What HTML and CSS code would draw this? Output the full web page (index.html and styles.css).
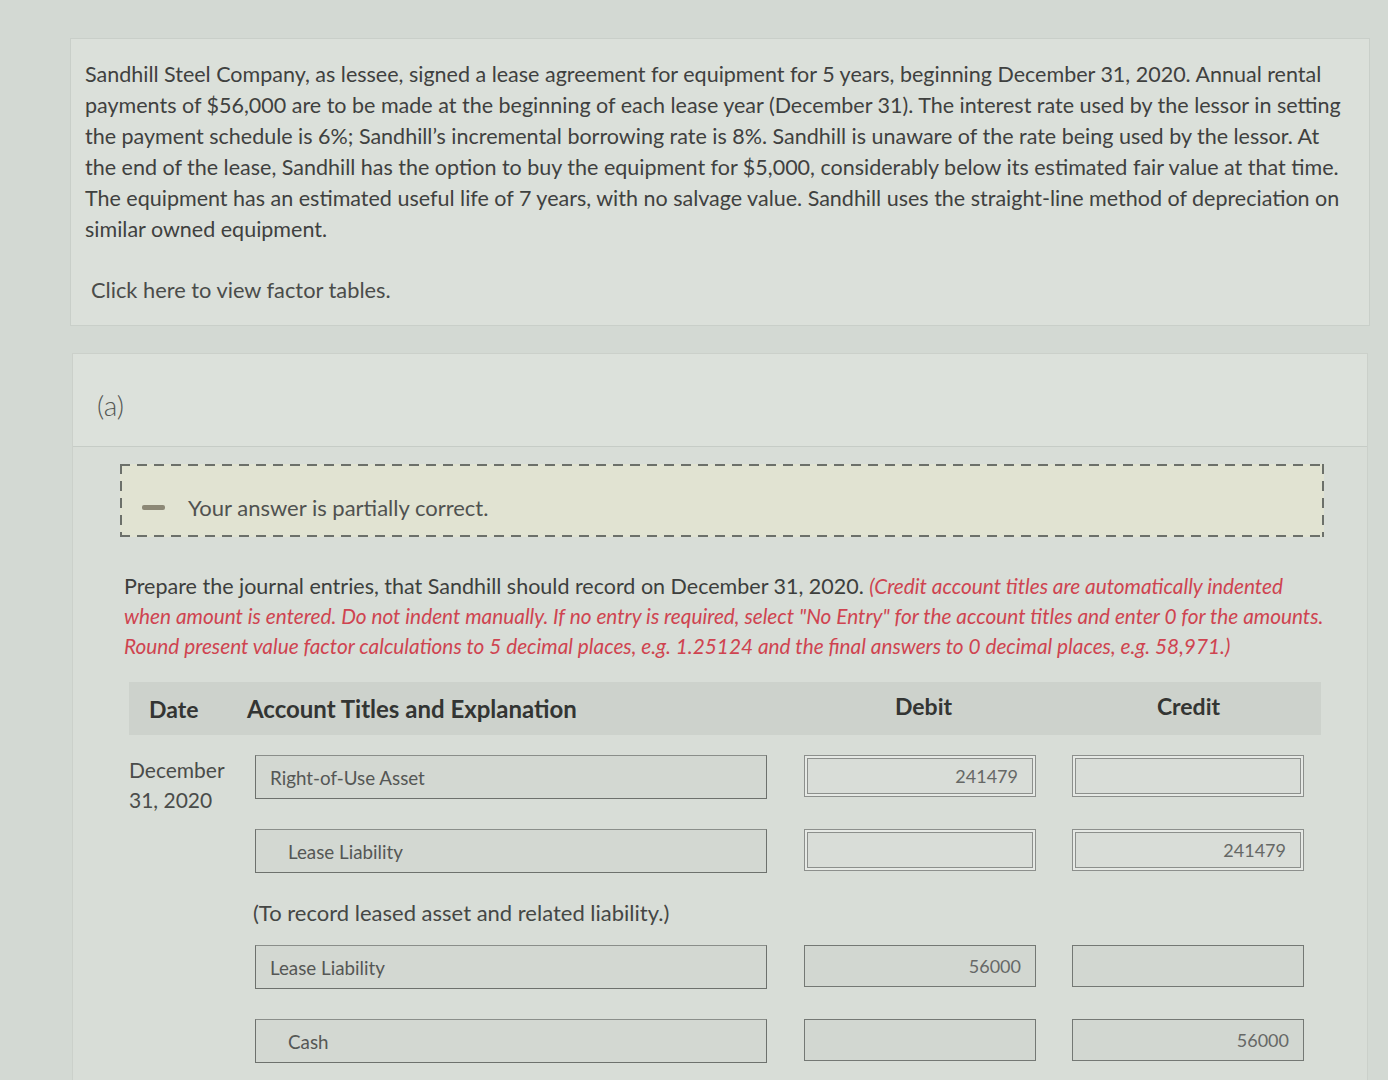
FILE: index.html
```html
<!DOCTYPE html>
<html lang="en">
<head>
<meta charset="utf-8">
<title>Lease journal entries</title>
<link rel="stylesheet" href="styles.css">
</head>
<body>
<div class="page">
  <section class="problem">
    <p class="statement">Sandhill Steel Company, as lessee, signed a lease agreement for equipment for 5 years, beginning December 31, 2020. Annual rental<br>payments of $56,000 are to be made at the beginning of each lease year (December 31). The interest rate used by the lessor in setting<br>the payment schedule is 6%; Sandhill’s incremental borrowing rate is 8%. Sandhill is unaware of the rate being used by the lessor. At<br>the end of the lease, Sandhill has the option to buy the equipment for $5,000, considerably below its estimated fair value at that time.<br>The equipment has an estimated useful life of 7 years, with no salvage value. Sandhill uses the straight-line method of depreciation on<br>similar owned equipment.</p>
    <p class="factor-link">Click here to view factor tables.</p>
  </section>

  <section class="part">
    <div class="part-head">(a)</div>
    <div class="part-body">
      <div class="feedback">
        <span class="minus"></span>
        <span class="feedback-text">Your answer is partially correct.</span>
      </div>

      <p class="instructions">Prepare the journal entries, that Sandhill should record on December 31, 2020. <em class="note">(Credit account titles are automatically indented<br>when amount is entered. Do not indent manually. If no entry is required, select "No Entry" for the account titles and enter 0 for the amounts.<br>Round present value factor calculations to 5 decimal places, e.g. 1.25124 and the final answers to 0 decimal places, e.g. 58,971.)</em></p>

      <div class="journal">
        <div class="jhead">
          <div class="h-date">Date</div>
          <div class="h-acct">Account Titles and Explanation</div>
          <div class="h-num">Debit</div>
          <div class="h-num">Credit</div>
        </div>

        <div class="jrow">
          <div class="date">December<br>31, 2020</div>
          <div class="acct">Right-of-Use Asset</div>
          <div class="amt dbl">241479</div>
          <div class="amt dbl"></div>
        </div>
        <div class="jrow">
          <div class="date"></div>
          <div class="acct credit">Lease Liability</div>
          <div class="amt dbl"></div>
          <div class="amt dbl">241479</div>
        </div>
        <div class="memo">(To record leased asset and related liability.)</div>

        <div class="jrow">
          <div class="date"></div>
          <div class="acct">Lease Liability</div>
          <div class="amt">56000</div>
          <div class="amt"></div>
        </div>
        <div class="jrow">
          <div class="date"></div>
          <div class="acct credit">Cash</div>
          <div class="amt"></div>
          <div class="amt">56000</div>
        </div>
      </div>
    </div>
  </section>
</div>
</body>
</html>
```

FILE: styles.css
```css
html, body {
  margin: 0;
  padding: 0;
}
body {
  background: #d3d9d3;
  font-family: Lato, "Open Sans", "Liberation Sans", sans-serif;
  color: #404240;
  overflow: hidden;
  height: 1080px;
}
.page {
  padding-top: 38px;
}
.problem {
  margin-left: 70px;
  width: 1300px;
  box-sizing: border-box;
  background: #dbe0da;
  border: 1px solid #c9cfc9;
  padding: 20px 14px 20px 14px;
}
.statement {
  margin: 0;
  font-size: 21.5px;
  line-height: 31px;
  color: #3f413f;
}
.factor-link {
  margin: 29px 0 0 6px;
  font-size: 21.8px;
  line-height: 31px;
  color: #4a4c4a;
}
.part {
  margin: 27px 0 0 72px;
  width: 1296px;
  background: #d8ddd7;
  border: 1px solid #cbd0ca;
  box-sizing: border-box;
  height: 740px;
}
.part-head {
  height: 93px;
  box-sizing: border-box;
  padding: 34px 0 0 24px;
  font-size: 28px;
  font-weight: 300;
  color: #555855;
  background: #dce1db;
  border-bottom: 1px solid #c6ccc6;
}
.part-body {
  padding: 17px 43px 0 47px;
}
.feedback {
  height: 73px;
  box-sizing: border-box;
  background-color: #e1e3d2;
  background-image:
    repeating-linear-gradient(90deg, #6c706a 0 10px, transparent 10px 17px),
    repeating-linear-gradient(90deg, #6c706a 0 10px, transparent 10px 17px),
    repeating-linear-gradient(180deg, #6c706a 0 10px, transparent 10px 17px),
    repeating-linear-gradient(180deg, #6c706a 0 10px, transparent 10px 17px);
  background-size: 100% 2px, 100% 2px, 2px 100%, 2px 100%;
  background-position: top left, bottom left, top left, top right;
  background-repeat: no-repeat;
  display: flex;
  align-items: center;
  padding: 14px 0 0 22px;
}
.minus {
  width: 23px;
  height: 5px;
  border-radius: 2px;
  background: #8c8876;
  margin-right: 23px;
}
.feedback-text {
  font-size: 22px;
  color: #505250;
}
.instructions {
  margin: 34px 0 0 4px;
  font-size: 21.5px;
  line-height: 30px;
  color: #3d3f3d;
}
.note {
  color: #cf4450;
  font-style: italic;
  font-size: 20.8px;
}
.journal {
  margin: 21px 0 0 9px;
  width: 1192px;
}
.jhead, .jrow {
  display: grid;
  grid-template-columns: 118px 544px 265px 265px;
}
.jhead {
  height: 53px;
  align-items: center;
  background: #cdd2cc;
  font-weight: 700;
  font-size: 23px;
  color: #333533;
}
.h-date {
  padding-left: 20px;
}
.h-acct {
  font-size: 24px;
}
.h-num {
  text-align: center;
  align-self: start;
  padding-top: 10px;
}
.jrow {
  margin-top: 20px;
  height: 44px;
  align-items: start;
}
.jrow + .jrow {
  margin-top: 30px;
}
.memo + .jrow {
  margin-top: 17px;
}
.date {
  font-size: 21px;
  line-height: 30px;
  color: #4a4c4a;
}
.acct {
  margin-left: 8px;
  width: 512px;
  height: 44px;
  box-sizing: border-box;
  border: 1px solid #6d716d;
  border-top-color: #8a8e8a;
  background: #d3d8d2;
  display: flex;
  align-items: center;
  padding-left: 14px;
  font-size: 18.8px;
  color: #555755;
}
.acct.credit {
  padding-left: 32px;
}
.amt {
  width: 232px;
  height: 42px;
  box-sizing: border-box;
  border: 1px solid #747874;
  background: #d2d7d1;
  display: flex;
  align-items: center;
  justify-content: flex-end;
  padding-right: 14px;
  font-size: 18px;
  color: #666866;
}
.jrow .amt:nth-child(3) {
  margin-left: 13px;
}
.jrow .amt:nth-child(4) {
  margin-left: 16px;
}
.amt.dbl {
  border-color: #8c8f8c;
  background: #d9ddd8;
  box-shadow: inset 0 0 0 2px #e6e9e5, inset 0 0 0 3px #8c8f8c;
  padding-right: 17px;
}
.memo {
  margin: 25px 0 0 124px;
  font-size: 22px;
  line-height: 30px;
  color: #454745;
}
```
